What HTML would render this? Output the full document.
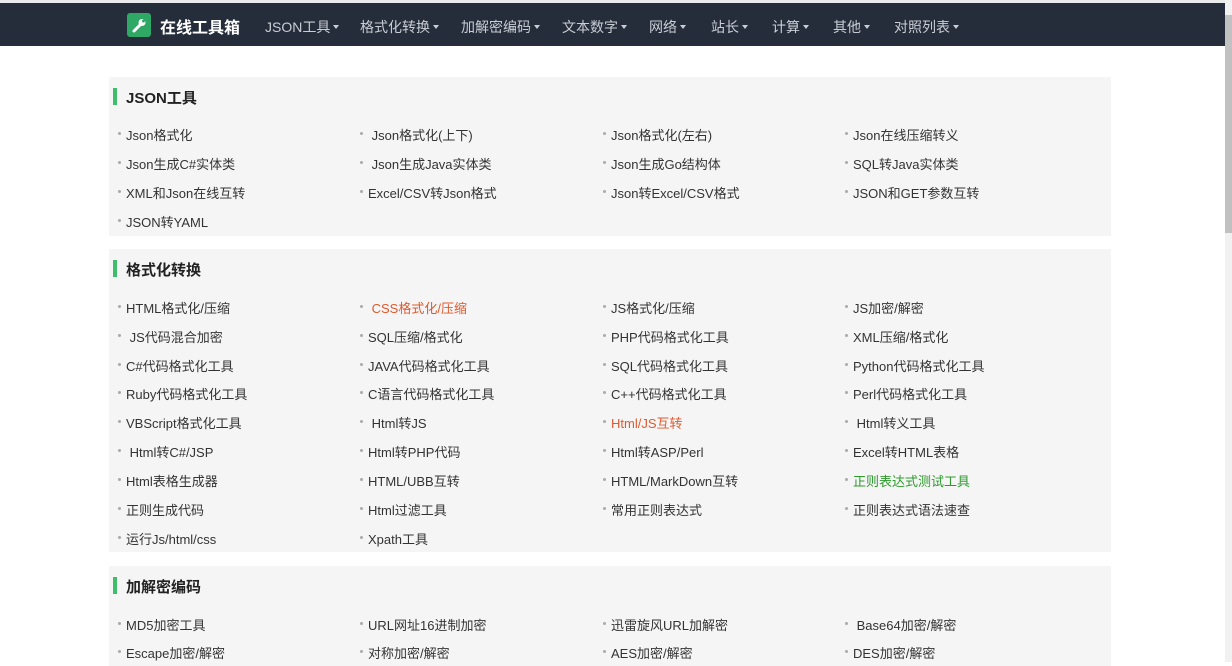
<!DOCTYPE html>
<html><head><meta charset="utf-8"><style>
*{margin:0;padding:0;box-sizing:border-box}
body{width:1232px;height:662px;overflow:hidden;background:#fff;font-family:"Liberation Sans","Noto Sans CJK SC",sans-serif;color:#333;position:relative}
.top{position:absolute;left:0;top:0;width:1232px;height:3px;background:#e8eaec}
.nav{position:absolute;left:0;top:3px;width:1225px;height:43px;background:#252d3b}
.logo{position:absolute;left:127px;top:10px;width:24px;height:24px;background:#2fa866;border-radius:3px}
.brand{position:absolute;left:160px;top:11px;font-size:16px;font-weight:bold;color:#fff}
.menu{position:absolute;top:14px;font-size:14px;color:#c9ced6;white-space:nowrap}
.menu span{position:absolute}
.menu span:after{content:"";display:inline-block;margin-left:3px;vertical-align:3px;border-top:4px solid #c9ced6;border-left:3px solid transparent;border-right:3px solid transparent}
.sb{position:absolute;left:1225px;top:0;width:7px;height:662px;background:#f1f1f1}
.sb i{position:absolute;left:0;top:15px;width:7px;height:218px;background:#c1c1c1}
.sec{position:absolute;left:109px;width:1002px;background:#f5f5f5}
.sec h2{position:absolute;left:17px;font-size:15px;font-weight:bold;color:#222}
.sec h2:before{content:"";position:absolute;left:-13px;top:1px;width:4px;height:17px;background:#3cbe6a}
.it{position:absolute;font-size:13px;white-space:nowrap}
.it:before{content:"";position:absolute;left:-8px;top:7px;width:3px;height:3px;border-radius:50%;background:#aaa}
.r{color:#de5a2e}.g{color:#2e9a2e}
</style></head><body>
<div class="top"></div>
<div class="nav">
<div class="logo"><svg width="24" height="24" viewBox="0 0 24 24"><path d="M7 18 L13 12" stroke="#fff" stroke-width="3" stroke-linecap="round"/><circle cx="15" cy="9.5" r="3.5" fill="#fff"/><circle cx="16.5" cy="8" r="1.5" fill="#2fa866"/></svg></div>
<div class="brand">在线工具箱</div>
<div class="menu"><span style="left:265px">JSON工具</span><span style="left:360px">格式化转换</span><span style="left:461px">加解密编码</span><span style="left:562px">文本数字</span><span style="left:649px">网络</span><span style="left:711px">站长</span><span style="left:772px">计算</span><span style="left:833px">其他</span><span style="left:894px">对照列表</span></div>
</div>
<div class="sb"><i></i></div>

<div class="sec" style="top:77px;height:159px">
<h2 style="top:10px">JSON工具</h2>
<div class="it" style="left:17px;top:48px">Json格式化</div><div class="it" style="left:259px;top:48px">&nbsp;Json格式化(上下)</div><div class="it" style="left:502px;top:48px">Json格式化(左右)</div><div class="it" style="left:744px;top:48px">Json在线压缩转义</div>
<div class="it" style="left:17px;top:77px">Json生成C#实体类</div><div class="it" style="left:259px;top:77px">&nbsp;Json生成Java实体类</div><div class="it" style="left:502px;top:77px">Json生成Go结构体</div><div class="it" style="left:744px;top:77px">SQL转Java实体类</div>
<div class="it" style="left:17px;top:106px">XML和Json在线互转</div><div class="it" style="left:259px;top:106px">Excel/CSV转Json格式</div><div class="it" style="left:502px;top:106px">Json转Excel/CSV格式</div><div class="it" style="left:744px;top:106px">JSON和GET参数互转</div>
<div class="it" style="left:17px;top:135px">JSON转YAML</div>
</div>

<div class="sec" style="top:249px;height:303px">
<h2 style="top:10px">格式化转换</h2>
<div class="it" style="left:17px;top:49px">HTML格式化/压缩</div><div class="it r" style="left:259px;top:49px">&nbsp;CSS格式化/压缩</div><div class="it" style="left:502px;top:49px">JS格式化/压缩</div><div class="it" style="left:744px;top:49px">JS加密/解密</div>
<div class="it" style="left:17px;top:78px">&nbsp;JS代码混合加密</div><div class="it" style="left:259px;top:78px">SQL压缩/格式化</div><div class="it" style="left:502px;top:78px">PHP代码格式化工具</div><div class="it" style="left:744px;top:78px">XML压缩/格式化</div>
<div class="it" style="left:17px;top:107px">C#代码格式化工具</div><div class="it" style="left:259px;top:107px">JAVA代码格式化工具</div><div class="it" style="left:502px;top:107px">SQL代码格式化工具</div><div class="it" style="left:744px;top:107px">Python代码格式化工具</div>
<div class="it" style="left:17px;top:135px">Ruby代码格式化工具</div><div class="it" style="left:259px;top:135px">C语言代码格式化工具</div><div class="it" style="left:502px;top:135px">C++代码格式化工具</div><div class="it" style="left:744px;top:135px">Perl代码格式化工具</div>
<div class="it" style="left:17px;top:164px">VBScript格式化工具</div><div class="it" style="left:259px;top:164px">&nbsp;Html转JS</div><div class="it r" style="left:502px;top:164px">Html/JS互转</div><div class="it" style="left:744px;top:164px">&nbsp;Html转义工具</div>
<div class="it" style="left:17px;top:193px">&nbsp;Html转C#/JSP</div><div class="it" style="left:259px;top:193px">Html转PHP代码</div><div class="it" style="left:502px;top:193px">Html转ASP/Perl</div><div class="it" style="left:744px;top:193px">Excel转HTML表格</div>
<div class="it" style="left:17px;top:222px">Html表格生成器</div><div class="it" style="left:259px;top:222px">HTML/UBB互转</div><div class="it" style="left:502px;top:222px">HTML/MarkDown互转</div><div class="it g" style="left:744px;top:222px">正则表达式测试工具</div>
<div class="it" style="left:17px;top:251px">正则生成代码</div><div class="it" style="left:259px;top:251px">Html过滤工具</div><div class="it" style="left:502px;top:251px">常用正则表达式</div><div class="it" style="left:744px;top:251px">正则表达式语法速查</div>
<div class="it" style="left:17px;top:280px">运行Js/html/css</div><div class="it" style="left:259px;top:280px">Xpath工具</div>
</div>

<div class="sec" style="top:566px;height:100px">
<h2 style="top:10px">加解密编码</h2>
<div class="it" style="left:17px;top:49px">MD5加密工具</div><div class="it" style="left:259px;top:49px">URL网址16进制加密</div><div class="it" style="left:502px;top:49px">迅雷旋风URL加解密</div><div class="it" style="left:744px;top:49px">&nbsp;Base64加密/解密</div>
<div class="it" style="left:17px;top:77px">Escape加密/解密</div><div class="it" style="left:259px;top:77px">对称加密/解密</div><div class="it" style="left:502px;top:77px">AES加密/解密</div><div class="it" style="left:744px;top:77px">DES加密/解密</div>
</div>
</body></html>
